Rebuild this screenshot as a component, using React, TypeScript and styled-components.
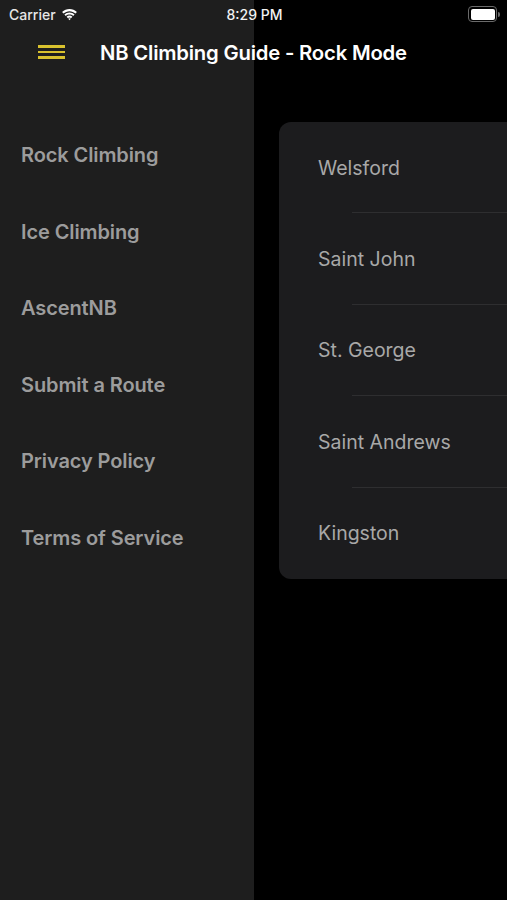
import React from "react";
import styled, { createGlobalStyle } from "styled-components";

const GlobalStyle = createGlobalStyle`
  html, body {
    margin: 0;
    padding: 0;
    background: #000;
  }
  body {
    font-family: Inter, "Noto Sans", "Liberation Sans", sans-serif;
    -webkit-font-smoothing: antialiased;
  }
`;

const DRAWER = 254;

const Screen = styled.div`
  width: 507px;
  height: 900px;
  display: flex;
  flex-direction: column;
  background: linear-gradient(to right, #1e1e1e ${DRAWER}px, #000 ${DRAWER}px);
  overflow: hidden;
`;

const StatusBar = styled.div`
  height: 28px;
  display: grid;
  grid-template-columns: 1fr auto 1fr;
  align-items: center;
  padding: 0 7px 0 9px;
  color: #fff;
  font-size: 14px;
  font-weight: 500;
`;

const Carrier = styled.div`
  display: flex;
  align-items: center;
  gap: 5px;
  color: #e6e6e6;
`;

const Clock = styled.div`
  text-align: center;
  color: #f2f2f2;
`;

const Battery = styled.div`
  justify-self: end;
  display: flex;
  align-items: center;
  gap: 1px;
`;

const BatteryBody = styled.div`
  width: 24px;
  height: 11px;
  border: 1.5px solid #6a6a6a;
  border-radius: 4px;
  padding: 1.5px;
  box-sizing: content-box;
  display: flex;
`;

const BatteryFill = styled.div`
  flex: 1;
  background: #fff;
  border-radius: 2px;
`;

const BatteryCap = styled.div`
  width: 2px;
  height: 5px;
  background: #6a6a6a;
  border-radius: 0 2px 2px 0;
`;

const NavBar = styled.div`
  height: 48px;
  display: flex;
  align-items: center;
  padding-left: 38px;
  gap: 35px;
`;

const Hamburger = styled.div`
  width: 27px;
  display: flex;
  flex-direction: column;
  gap: 3px;
`;

const HamLine = styled.div`
  height: 2.5px;
  background: #d9c22e;
`;

const Title = styled.div`
  color: #fff;
  font-size: 20.3px;
  font-weight: 600;
  letter-spacing: -0.2px;
`;

const Body = styled.div`
  flex: 1;
  display: flex;
`;

const Drawer = styled.nav`
  width: ${DRAWER}px;
  display: flex;
  flex-direction: column;
  padding: 67px 0 0 21px;
  box-sizing: border-box;
`;

const MenuItem = styled.div`
  height: 76.6px;
  color: #9c9c9c;
  font-size: 20px;
  font-weight: 600;
  letter-spacing: -0.1px;
`;

const Main = styled.main`
  flex: 1;
  padding: 46px 0 0 25px;
`;

const Card = styled.div`
  background: #1c1c1e;
  border-radius: 12px 0 0 12px;
  overflow: hidden;
`;

const Row = styled.div<{ $last?: boolean }>`
  height: 91.4px;
  display: flex;
  align-items: center;
  padding-left: 39px;
  color: #a8a8a8;
  font-size: 19.5px;
  position: relative;
  &::after {
    content: "";
    display: ${(p) => (p.$last ? "none" : "block")};
    position: absolute;
    left: 73px;
    right: 0;
    bottom: 0;
    height: 1px;
    background: #2e2e30;
  }
`;

const menu = [
  "Rock Climbing",
  "Ice Climbing",
  "AscentNB",
  "Submit a Route",
  "Privacy Policy",
  "Terms of Service",
];

const areas = ["Welsford", "Saint John", "St. George", "Saint Andrews", "Kingston"];

const Wifi = () => (
  <svg width="17" height="13" viewBox="0 0 17 13">
    <path d="M8.5 3.2c2.3 0 4.4.9 6 2.4l1.4-1.5C13.9 2.2 11.3 1.1 8.5 1.1S3.1 2.2 1.1 4.1l1.4 1.5c1.6-1.5 3.7-2.4 6-2.4z" fill="#fff" />
    <path d="M8.5 6.5c1.4 0 2.7.5 3.7 1.4l1.4-1.5C12.2 5.2 10.4 4.4 8.5 4.4S4.8 5.2 3.4 6.4l1.4 1.5c1-.9 2.3-1.4 3.7-1.4z" fill="#fff" />
    <path d="M8.5 9.6c.6 0 1.1.2 1.5.6l1.4-1.5c-.8-.7-1.8-1.2-2.9-1.2s-2.1.5-2.9 1.2L7 10.2c.4-.4.9-.6 1.5-.6z" fill="#fff" />
    <path d="M8.5 12.2l1.3-1.4c-.3-.3-.8-.5-1.3-.5s-1 .2-1.3.5z" fill="#fff" />
  </svg>
);

export default function App() {
  return (
    <>
      <GlobalStyle />
      <Screen>
        <StatusBar>
          <Carrier>
            Carrier
            <Wifi />
          </Carrier>
          <Clock>8:29 PM</Clock>
          <Battery>
            <BatteryBody>
              <BatteryFill />
            </BatteryBody>
            <BatteryCap />
          </Battery>
        </StatusBar>
        <NavBar>
          <Hamburger>
            <HamLine />
            <HamLine />
            <HamLine />
          </Hamburger>
          <Title>NB Climbing Guide - Rock Mode</Title>
        </NavBar>
        <Body>
          <Drawer>
            {menu.map((m) => (
              <MenuItem key={m}>{m}</MenuItem>
            ))}
          </Drawer>
          <Main>
            <Card>
              {areas.map((a, i) => (
                <Row key={a} $last={i === areas.length - 1}>
                  {a}
                </Row>
              ))}
            </Card>
          </Main>
        </Body>
      </Screen>
    </>
  );
}
